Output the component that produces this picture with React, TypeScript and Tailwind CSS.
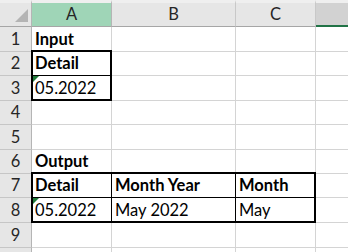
import React from "react";

const rowHeights = [25, 24, 25, 24, 25, 24, 24, 25, 25, 10];

type CellDef = { text?: string; bold?: boolean; tri?: boolean; br?: boolean; bb?: boolean };

const data: Record<number, CellDef[]> = {
  1: [{ text: "Input", bold: true }, {}, {}],
  2: [{ text: "Detail", bold: true, bb: true }, {}, {}],
  3: [{ text: "05.2022", tri: true }, {}, {}],
  6: [{ text: "Output", bold: true }, {}, {}],
  7: [
    { text: "Detail", bold: true, br: true, bb: true },
    { text: "Month Year", bold: true, br: true, bb: true },
    { text: "Month", bold: true, bb: true },
  ],
  8: [
    { text: "05.2022", tri: true, br: true },
    { text: "May 2022", br: true },
    { text: "May" },
  ],
};

function Cell({ c }: { c: CellDef }) {
  return (
    <div
      className={`relative flex items-end pl-[3px] pb-[2px] border-r border-b ${
        c.br ? "border-r-black" : "border-r-[#d4d4d4]"
      } ${c.bb ? "border-b-black" : "border-b-[#d4d4d4]"} overflow-visible whitespace-nowrap`}
    >
      {c.tri && (
        <div className="absolute left-0 top-0 w-0 h-0 border-t-[7px] border-t-[#1f7a3a] border-r-[7px] border-r-transparent" />
      )}
      {c.text && (
        <span className={`leading-[20px] text-[16.5px] text-black ${c.bold ? "font-bold" : ""}`}>{c.text}</span>
      )}
    </div>
  );
}

export default function App() {
  return (
    <div
      className="relative w-[348px] h-[252px] overflow-hidden bg-white"
      style={{ fontFamily: "Lato, 'Noto Sans', sans-serif" }}
    >
      <div className="grid grid-cols-[32px_80px_124px_80px_32px]">
        {/* header row */}
        <div className="h-[27px] bg-[#e6e6e6] border-r border-r-[#b5b5b5] border-b border-b-[#a6a6a6] relative border-t-[3px] border-t-[#efefef]">
          <svg className="absolute left-[15px] top-[6px]" width="13" height="13" viewBox="0 0 13 13">
            <polygon points="13,0 13,13 0,13" fill="#b4b4b4" />
          </svg>
        </div>
        <div className="h-[27px] bg-[#9fd5b7] border-r border-r-[#b5b5b5] border-b border-b-[#a6a6a6] border-t-[3px] border-t-[#efefef] flex items-center justify-center text-[16.5px] text-[#262626]">
          A
        </div>
        <div className="h-[27px] bg-[#e6e6e6] border-r border-r-[#c8c8c8] border-b border-b-[#a6a6a6] border-t-[3px] border-t-[#efefef] flex items-center justify-center text-[16.5px] text-[#262626]">
          B
        </div>
        <div className="h-[27px] bg-[#e6e6e6] border-r border-r-[#c8c8c8] border-b border-b-[#a6a6a6] border-t-[3px] border-t-[#efefef] flex items-center justify-center text-[16.5px] text-[#262626]">
          C
        </div>
        <div className="h-[27px] bg-[#d2d2d2] border-b-2 border-b-[#217346] border-t-[3px] border-t-[#efefef]" />

        {rowHeights.map((h, i) => {
          const r = i + 1;
          const cells = data[r] || [{}, {}, {}];
          return (
            <React.Fragment key={r}>
              <div
                style={{ height: h }}
                className="bg-[#e6e6e6] border-r border-r-[#b5b5b5] border-b border-b-[#c6c6c6] flex items-center justify-center text-[16.5px] text-[#262626]"
              >
                {r <= 9 ? r : ""}
              </div>
              {cells.map((c, j) => (
                <Cell key={j} c={c} />
              ))}
              <div className="border-b border-b-[#d4d4d4]" />
            </React.Fragment>
          );
        })}
      </div>

      {/* range borders */}
      <div className="absolute left-[31px] top-[50px] w-[81px] h-[51px] border-2 border-black pointer-events-none" />
      <div className="absolute left-[31px] top-[172px] w-[285px] h-[51px] border-2 border-black pointer-events-none" />
    </div>
  );
}
